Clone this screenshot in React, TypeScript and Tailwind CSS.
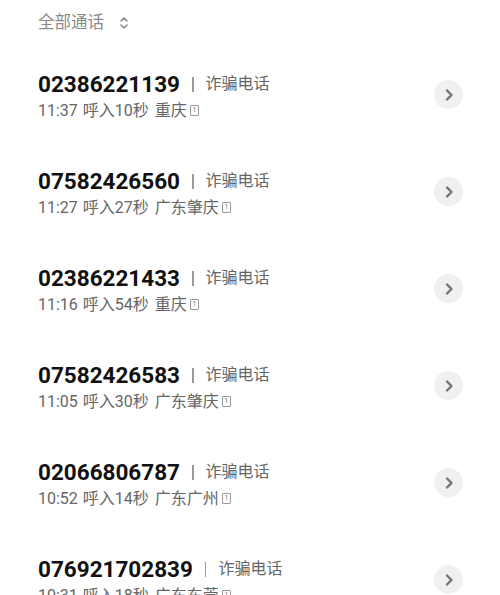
import React from "react";

interface CallRecord {
  number: string;
  time: string;
  duration: string;
  location: string;
}

const calls: CallRecord[] = [
  { number: "02386221139", time: "11:37", duration: "呼入10秒", location: "重庆" },
  { number: "07582426560", time: "11:27", duration: "呼入27秒", location: "广东肇庆" },
  { number: "02386221433", time: "11:16", duration: "呼入54秒", location: "重庆" },
  { number: "07582426583", time: "11:05", duration: "呼入30秒", location: "广东肇庆" },
  { number: "02066806787", time: "10:52", duration: "呼入14秒", location: "广东广州" },
  { number: "076921702839", time: "10:31", duration: "呼入18秒", location: "广东东莞" },
];

const font = { fontFamily: '"Roboto", "Noto Sans CJK SC", sans-serif' };

const SimBadge = () => (
  <span className="ml-[3px] inline-flex h-[11px] w-[9px] items-center justify-center rounded-[1px] border border-[#999] text-[7px] leading-none text-[#777]">
    1
  </span>
);

const CallRow: React.FC<{ call: CallRecord }> = ({ call }) => (
  <div className="flex h-[97px] items-center justify-between pl-[38px] pr-[37px]">
    <div className="mt-[3px] flex flex-col">
      <div className="flex items-center leading-[28px]">
        <span className="text-[22.5px] font-bold text-[#111]">{call.number}</span>
        <span className="ml-[12px] h-[15px] w-[1.5px] bg-[#9a9a9a]" />
        <span className="ml-[12px] text-[16px] text-[#666]">诈骗电话</span>
      </div>
      <div className="mt-[1px] flex items-center text-[16px] leading-[23px] text-[#666]">
        <span>{call.time}</span>
        <span className="ml-[5px]">{call.duration}</span>
        <span className="ml-[6px]">{call.location}</span>
        <SimBadge />
      </div>
    </div>
    <div className="flex h-[29px] w-[29px] items-center justify-center rounded-full bg-[#f0f0f0]">
      <svg width="12" height="14" viewBox="0 0 12 14" fill="none">
        <path
          d="M4 2.5 L8.5 7 L4 11.5"
          stroke="#747474"
          strokeWidth="2.4"
          strokeLinecap="round"
          strokeLinejoin="round"
        />
      </svg>
    </div>
  </div>
);

export default function App() {
  return (
    <div className="h-[595px] w-[500px] overflow-hidden bg-white" style={font}>
      <div className="flex h-[46px] items-center pl-[38px]">
        <span className="text-[16.5px] text-[#8a8a8a]">全部通话</span>
        <svg className="ml-[15px]" width="10" height="16" viewBox="0 0 10 16" fill="none">
          <path
            d="M2 6 L5 3 L8 6 M2 10 L5 13 L8 10"
            stroke="#8a8a8a"
            strokeWidth="1.6"
            strokeLinecap="round"
            strokeLinejoin="round"
          />
        </svg>
      </div>
      {calls.map((c) => (
        <CallRow key={c.number} call={c} />
      ))}
    </div>
  );
}
